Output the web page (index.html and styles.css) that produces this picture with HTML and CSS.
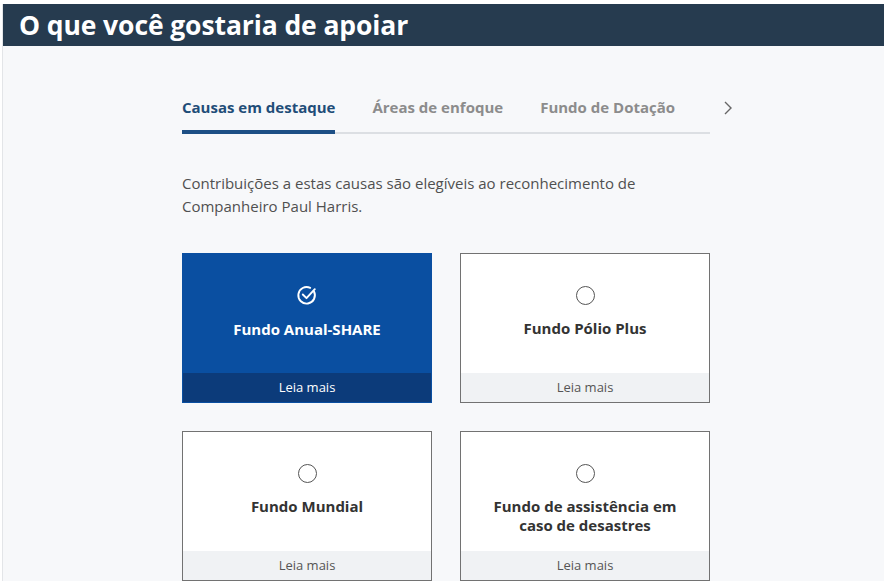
FILE: index.html
```html
<!DOCTYPE html>
<html lang="pt">
<head>
    <meta charset="UTF-8">
    <title>O que você gostaria de apoiar</title>
    <link rel="stylesheet" href="styles.css">
</head>
<body>
    <div class="page">
        <!-- 제목 -->
        <h1 class="ttl">O que você gostaria de apoiar</h1>

        <div class="cont">
            <!-- 탭메뉴 -->
            <div class="tabs">
                <ul class="tablist">
                    <li class="on">Causas em destaque</li>
                    <li>Áreas de enfoque</li>
                    <li>Fundo de Dotação</li>
                </ul>
                <span class="next">
                    <svg width="10" height="16" viewBox="0 0 10 16"><path d="M2 2l6 6-6 6" fill="none" stroke="#666" stroke-width="1.4"/></svg>
                </span>
            </div>

            <p class="desc">Contribuições a estas causas são elegíveis ao reconhecimento de Companheiro Paul Harris.</p>

            <!-- 카드목록 -->
            <div class="cards">
                <div class="card sel">
                    <div class="cbody">
                        <svg class="ico" width="22" height="22" viewBox="0 0 22 22"><path d="M18 7.5A8.3 8.3 0 1 1 14.2 3.8" fill="none" stroke="#fff" stroke-width="1.9" stroke-linecap="round"/><path d="M6.8 10.5l3.7 3.7 8.3-9" fill="none" stroke="#fff" stroke-width="1.9" stroke-linecap="round" stroke-linejoin="round"/></svg>
                        <h2>Fundo Anual-SHARE</h2>
                    </div>
                    <div class="more">Leia mais</div>
                </div>
                <div class="card">
                    <div class="cbody">
                        <span class="radio"></span>
                        <h2>Fundo Pólio Plus</h2>
                    </div>
                    <div class="more">Leia mais</div>
                </div>
                <div class="card">
                    <div class="cbody">
                        <span class="radio"></span>
                        <h2>Fundo Mundial</h2>
                    </div>
                    <div class="more">Leia mais</div>
                </div>
                <div class="card">
                    <div class="cbody">
                        <span class="radio"></span>
                        <h2>Fundo de assistência em caso de desastres</h2>
                    </div>
                    <div class="more">Leia mais</div>
                </div>
            </div>
        </div>
    </div>
</body>
</html>
```

FILE: styles.css
```css
html,body{
    margin: 0;
    padding: 0;
    background-color: #fff;
}
body{
    font-family: "Open Sans", "Liberation Sans", sans-serif;
    color: #333;
    overflow: hidden;
}
ul{
    margin: 0;
    padding: 0;
    list-style: none;
}

/* 전체박스 */
.page{
    margin-top: 4px;
    margin-left: 2px;
    height: 577px;
    background-color: #f7f8fa;
    border-left: 1px solid #e3e5e8;
}

/* 상단제목 */
.ttl{
    margin: 0;
    height: 42px;
    padding-left: 16px;
    background-color: #263b4f;
    color: #fff;
    font-size: 26.5px;
    font-weight: bold;
    line-height: 42px;
    letter-spacing: -0.1px;
}

.cont{
    width: 528px;
    margin-left: 179px;
    padding-top: 51px;
}

/* 탭 */
.tabs{
    display: flex;
    align-items: flex-start;
}
.tablist{
    flex-shrink: 0;
    display: flex;
    gap: 37px;
    width: 528px;
    border-bottom: 2px solid #dcdfe3;
}
.tablist li{
    font-size: 15px;
    font-weight: bold;
    color: #8c8c8c;
    line-height: 20px;
    padding-bottom: 13px;
    margin-bottom: -2px;
    border-bottom: 4px solid transparent;
}
.tablist li.on{
    color: #1f4d78;
    border-bottom-color: #1d4f85;
}
.next{
    margin-left: 13px;
    padding-top: 2px;
}

.desc{
    margin: 38px 0 0;
    font-size: 15px;
    line-height: 23px;
    color: #505050;
    width: 470px;
}

/* 카드 */
.cards{
    display: grid;
    grid-template-columns: 250px 250px;
    gap: 28px;
    margin-top: 35px;
}
.card{
    height: 150px;
    box-sizing: border-box;
    border: 1px solid #727272;
    background-color: #fff;
    display: flex;
    flex-direction: column;
}
.cbody{
    flex: 1;
    display: flex;
    flex-direction: column;
    align-items: center;
    padding-top: 30px;
}
.card h2{
    margin: 14px 0 0;
    font-size: 15px;
    line-height: 19px;
    font-weight: bold;
    color: #333;
    text-align: center;
    padding: 0 20px;
}
.radio{
    width: 19px;
    height: 19px;
    box-sizing: border-box;
    border: 1.5px solid #555;
    border-radius: 50%;
    margin-top: 2px;
}
.more{
    height: 29px;
    line-height: 29px;
    text-align: center;
    font-size: 13px;
    color: #555;
    background-color: #f0f2f4;
}

/* 선택된 카드 */
.card.sel{
    background-color: #0a4fa1;
    border-color: #0a4fa1;
}
.card.sel h2{
    color: #fff;
}
.card.sel .more{
    background-color: #0c3b7a;
    color: #fff;
}
```
